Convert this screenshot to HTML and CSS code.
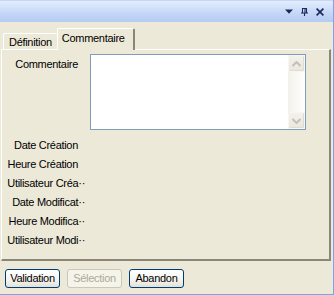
FILE: index.html
```html
<!DOCTYPE html>
<html>
<head>
<meta charset="utf-8">
<link rel="stylesheet" href="styles.css">
</head>
<body>
<div class="window">
  <div class="titlebar">
    <svg class="ticon" width="8" height="5" viewBox="0 0 8 5"><path d="M0 0.5h8L4 4.8z" fill="#1b2b57"/></svg>
    <svg class="ticon" width="7" height="8" viewBox="0 0 7 8"><path d="M1 0.5h5M1.5 0.5v4.5M5.5 0.5v4.5M4 0.5v4.5M0 5h7M3.5 5v3" stroke="#1b2b57" stroke-width="1.1" fill="none"/></svg>
    <svg class="ticon" width="8" height="8" viewBox="0 0 8 8"><path d="M0.6 0.6l6.8 6.8M7.4 0.6l-6.8 6.8" stroke="#1b2b57" stroke-width="1.7" fill="none"/></svg>
  </div>
  <div class="tabs">
    <div class="tab">Définition</div>
    <div class="tab active">Commentaire</div>
  </div>
  <div class="panel">
    <div class="form">
      <div class="label first">Commentaire</div>
      <div class="memo">
        <div class="memo-text"></div>
        <div class="scroll">
          <div class="sbtn"><svg width="9" height="6" viewBox="0 0 9 6"><path d="M0.5 5L4.5 1L8.5 5" stroke="#c3c1b5" stroke-width="2" fill="none"/></svg></div>
          <div class="track"></div>
          <div class="sbtn"><svg width="9" height="6" viewBox="0 0 9 6"><path d="M0.5 1L4.5 5L8.5 1" stroke="#c3c1b5" stroke-width="2" fill="none"/></svg></div>
        </div>
      </div>
    </div>
    <div class="labels">
      <div class="label">Date Création</div>
      <div class="label">Heure Création</div>
      <div class="label trunc">Utilisateur Créa··</div>
      <div class="label trunc">Date Modificat··</div>
      <div class="label trunc">Heure Modifica··</div>
      <div class="label trunc">Utilisateur Modi··</div>
    </div>
  </div>
  <div class="buttons">
    <div class="btn">Validation</div>
    <div class="btn disabled">Sélection</div>
    <div class="btn">Abandon</div>
  </div>
</div>
</body>
</html>
```
FILE: styles.css
```css
html, body { margin: 0; padding: 0; }
body {
  font-family: "Liberation Sans", Arial, sans-serif;
  font-size: 11px;
  letter-spacing: -0.3px;
  color: #000;
}
.window {
  width: 333px;
  height: 294px;
  background: #ece9d8;
  border-right: 1px solid #7ea4e6;
  border-bottom: 1px solid #7ea4e6;
  display: flex;
  flex-direction: column;
}
.titlebar {
  height: 22px;
  flex: none;
  background: linear-gradient(to bottom, #e3ecfc 0%, #c9daf8 50%, #b3caf3 100%);
  border-top: 1px solid #c7d8f6;
  box-sizing: border-box;
  display: flex;
  justify-content: flex-end;
  align-items: center;
  gap: 8px;
  padding-right: 9px;
}
.tabs {
  display: flex;
  align-items: flex-end;
  padding-left: 3px;
  margin-top: 6px;
  height: 21px;
  flex: none;
}
.tab {
  height: 16px;
  box-sizing: border-box;
  padding: 2px 5px 0 5px;
  border-top: 1px solid #fff;
  border-left: 1px solid #fff;
  border-radius: 2px 2px 0 0;
  line-height: 12px;
}
.tab.active {
  padding: 3px 8px 0 4px;
  border-right: 2px solid #8a8778;
  border-radius: 2px 2px 0 0;
  position: relative;
  z-index: 1;
  margin-bottom: -1px;
  background: #ece9d8;
  height: 22px;
}
.panel {
  margin-left: 1px;
  width: 330px;
  height: 212px;
  box-sizing: border-box;
  border-top: 1px solid #fff;
  border-left: 1px solid #fff;
  border-right: 2px solid #8a8778;
  border-bottom: 2px solid #8a8778;
  flex: none;
  padding-top: 4px;
}
.form {
  display: flex;
  align-items: flex-start;
}
.label {
  width: 76px;
  text-align: right;
  white-space: nowrap;
  line-height: 13px;
}
.label.first { margin-top: 4px; }
.memo {
  margin-left: 12px;
  width: 216px;
  height: 76px;
  box-sizing: border-box;
  border: 1px solid #7f9db9;
  background: #fff;
  display: flex;
}
.memo-text { flex: 1; }
.scroll {
  width: 17px;
  display: flex;
  flex-direction: column;
  background: linear-gradient(to right, #f3f1ea, #fefefd);
}
.sbtn {
  height: 17px;
  box-sizing: border-box;
  border: 1px solid #f7f6f2;
  border-radius: 2px;
  background: linear-gradient(to bottom, #f2f1ec, #e9e7de);
  box-shadow: inset -1px -1px 0 #dedbd0;
  display: flex;
  align-items: center;
  justify-content: center;
}
.track { flex: 1; }
.labels {
  display: flex;
  flex-direction: column;
  gap: 6px;
  margin-top: 9px;
}
.label.trunc { width: 83px; }
.buttons {
  display: flex;
  gap: 7px;
  padding-left: 5px;
  margin-top: 8px;
}
.btn {
  height: 19px;
  box-sizing: border-box;
  border: 1px solid #003c74;
  border-radius: 3px;
  background: linear-gradient(to bottom, #ffffff 0%, #f4f3ee 60%, #e3e0d5 100%);
  line-height: 17px;
  width: 55px;
  text-align: center;
}
.btn.disabled {
  border-color: #c9c7ba;
  color: #aca899;
  background: #f5f4ea;
}
```
